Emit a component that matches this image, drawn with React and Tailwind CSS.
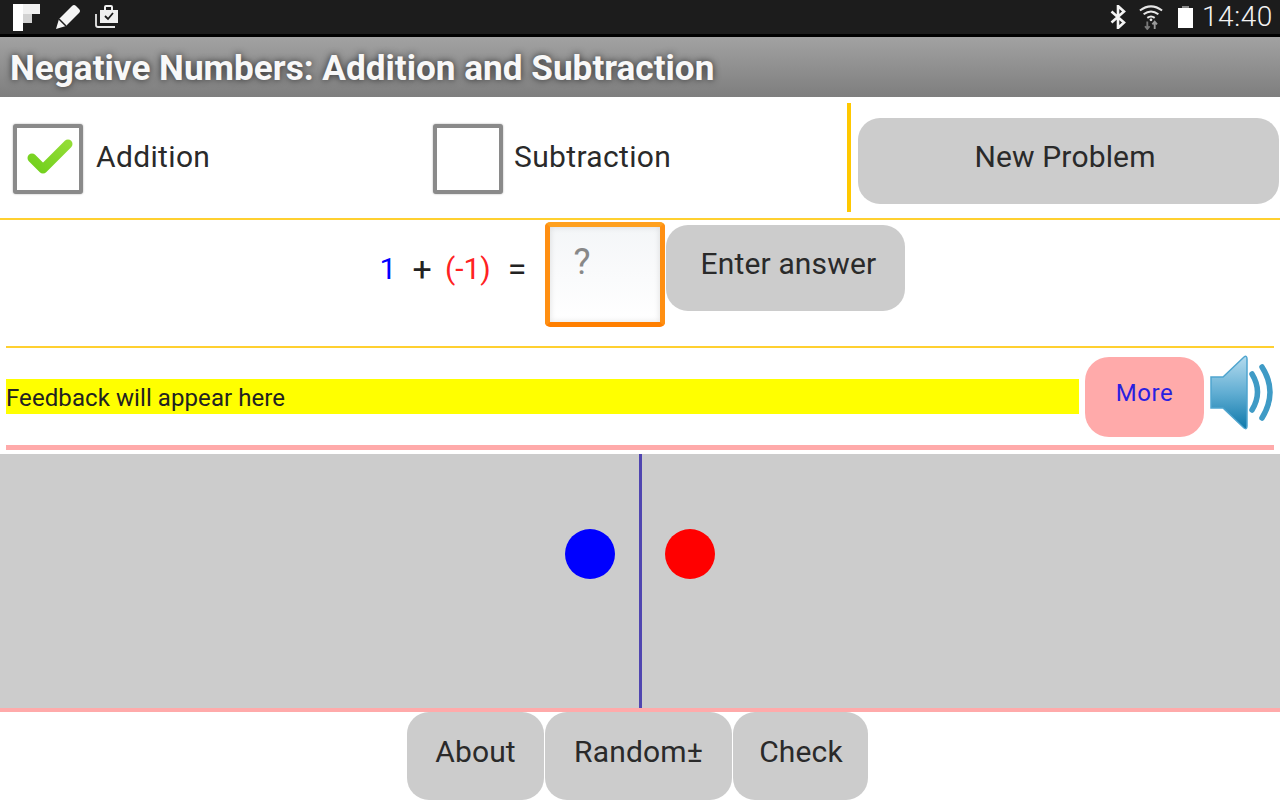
import React from "react";

function Check() {
  return (
    <svg width="50" height="44" viewBox="0 0 50 44" className="absolute left-[7px] top-[6px]">
      <defs>
        <linearGradient id="chk" x1="0" y1="1" x2="1" y2="0">
          <stop offset="0" stopColor="#72d01c" />
          <stop offset="1" stopColor="#92dc36" />
        </linearGradient>
      </defs>
      <path d="M8 24 L19 35 L44 10" fill="none" stroke="url(#chk)" strokeWidth="9" strokeLinecap="round" strokeLinejoin="round" />
    </svg>
  );
}

function CheckItem({ checked, label, className }) {
  return (
    <div className={"flex items-center " + className}>
      <div className="relative mt-[2px] w-[70px] h-[70px] shrink-0 border-[4px] border-[#8a8a8a] rounded-[3px] bg-white shadow-[0_0_2px_rgba(0,0,0,0.35)]">
        {checked && <Check />}
      </div>
      <span className="mb-[2px] text-[30px] leading-none tracking-[0.35px] text-[#2a2a2a]">{label}</span>
    </div>
  );
}

function GrayButton({ children, className }) {
  return (
    <div className={"flex justify-center bg-[#cccccc] text-[#2a2a2a] text-[30px] tracking-[0.15px] leading-none rounded-[22px] " + className}>
      {children}
    </div>
  );
}

function Speaker() {
  return (
    <svg width="64" height="76" viewBox="0 0 64 76" className="shrink-0">
      <defs>
        <linearGradient id="spk" x1="0" y1="0" x2="0" y2="1">
          <stop offset="0" stopColor="#b4dbee" />
          <stop offset="0.5" stopColor="#62aed3" />
          <stop offset="1" stopColor="#0f79ab" />
        </linearGradient>
      </defs>
      <path d="M1 22 H13 L34 2 Q37 0 37 4 V71 Q37 75 34 73 L13 53 H1 Z" fill="url(#spk)" stroke="#4fa5cf" strokeWidth="1.5" />
      <path d="M42 19 Q53 37 42 55" fill="none" stroke="#3f9bc6" strokeWidth="5.5" strokeLinecap="round" />
      <path d="M52 12 Q68 37 52 63" fill="none" stroke="#3f9bc6" strokeWidth="5.5" strokeLinecap="round" />
    </svg>
  );
}

function StatusBar() {
  return (
    <div className="h-[34px] bg-[#1c1c1c] flex items-center shrink-0">
      <svg width="27" height="27" viewBox="0 0 27 27" className="ml-[13px]">
        <rect x="0" y="0" width="10" height="27" fill="#ffffff" />
        <rect x="10" y="0" width="17" height="10" fill="#f0f0f0" />
        <rect x="10" y="10" width="9" height="9" fill="#d2d2d2" />
      </svg>
      <svg width="26" height="26" viewBox="0 0 26 26" className="ml-[15px]">
        <path d="M1 25 L4 15 L17 2 Q19 0 21 2 L24 5 Q26 7 24 9 L11 22 Z" fill="#f4f4f4" />
        <path d="M4 15 L11 22" stroke="#1c1c1c" strokeWidth="1.5" />
      </svg>
      <svg width="24" height="24" viewBox="0 0 24 24" className="ml-[14px]">
        <path d="M1 9 V20 Q1 22 3 22 H20" fill="none" stroke="#e8e8e8" strokeWidth="1.8" />
        <path d="M5 5 H9 V2 Q9 0 11 0 H16 Q18 0 18 2 V5 H23 V18 H5 Z" fill="#f0f0f0" />
        <rect x="11" y="2" width="5" height="3" fill="#1c1c1c" />
        <path d="M10 11 L13 14 L18 8" fill="none" stroke="#1c1c1c" strokeWidth="1.8" />
      </svg>
      <div className="ml-auto flex items-center">
        <svg width="16" height="24" viewBox="0 0 16 24">
          <path d="M1.5 6.5 L14 17.5 L8 23 V1 L14 6.5 L1.5 17.5" fill="none" stroke="#f4f4f4" strokeWidth="2.6" />
        </svg>
        <svg width="24" height="26" viewBox="0 0 26 26" className="ml-[13px]">
          <path d="M1 6 Q13 -3 25 6" fill="none" stroke="#e6e6e6" strokeWidth="2.2" />
          <path d="M5 10 Q13 4 21 10" fill="none" stroke="#e6e6e6" strokeWidth="2.2" />
          <path d="M9 14 Q13 11 17 14" fill="none" stroke="#e6e6e6" strokeWidth="2.2" />
          <circle cx="13" cy="16" r="1.5" fill="#e6e6e6" />
          <path d="M9 18 V26 M6.5 21 L9 18 L11.5 21" fill="none" stroke="#7a7a7a" strokeWidth="2" transform="rotate(180 9 22)" />
          <path d="M17 18 V26 M14.5 21 L17 18 L19.5 21" fill="none" stroke="#9a9a9a" strokeWidth="2" />
        </svg>
        <svg width="15" height="22" viewBox="0 0 15 22" className="ml-[15px]">
          <rect x="4" y="0" width="7" height="3" fill="#8a8a8a" />
          <rect x="0" y="2" width="15" height="20" fill="#ffffff" />
        </svg>
        <span className="ml-[9px] mr-[7px] text-[28px] leading-none tracking-[0.6px] text-[#f2f2f2] font-light">14:40</span>
      </div>
    </div>
  );
}

export default function App() {
  return (
    <div className="w-[1280px] h-[800px] overflow-hidden flex flex-col bg-white font-['Roboto',sans-serif]">
      <StatusBar />
      <div className="h-[3px] bg-black shrink-0" />
      <div className="h-[60px] shrink-0 flex items-center pl-[10px] pt-[3px] bg-gradient-to-b from-[#a2a2a2] to-[#7e7e7e]">
        <span className="text-[35.15px] leading-none font-bold text-[#f8f8f8] [text-shadow:0_0_7px_rgba(0,0,0,0.7)]">
          Negative Numbers: Addition and Subtraction
        </span>
      </div>

      <div className="h-[121px] shrink-0 flex items-center">
        <CheckItem checked label="Addition" className="ml-[13px] w-[420px] gap-[13px]" />
        <CheckItem label="Subtraction" className="w-[414px] gap-[11px]" />
        <div className="w-[4px] h-[109px] bg-[#ffc800]" />
        <GrayButton className="ml-[7px] w-[421px] h-[86px] mt-[7px] items-center pb-[8px] pr-[7px]">New Problem</GrayButton>
      </div>
      <div className="h-[2px] bg-[#ffd030] shrink-0" />

      <div className="h-[126px] shrink-0 flex items-start justify-center pl-[5px] pt-[2px]">
        <div className="flex items-center h-[94px] text-[30px] leading-none text-[#222]">
          <span className="text-[#0000ff] w-[14px]">1</span>
          <span className="ml-[19px] text-[34px]">+</span>
          <span className="ml-[13px] text-[#ff2222]">(-1)</span>
          <span className="ml-[17px] text-[34px]">=</span>
        </div>
        <div className="ml-[19px] w-[120px] h-[105px] rounded-[5px] border-[5px] border-[#ff8f12] border-t-[#ffa01e] border-b-[#ff7f00] bg-gradient-to-b from-[#f4f6f8] to-white text-[36px] leading-none text-[#888] pl-[23px] pt-[17px] shadow-[inset_0_0_6px_rgba(0,0,0,0.12)]">
          ?
        </div>
        <GrayButton className="ml-[1px] mt-[3px] w-[239px] h-[86px] items-center pb-[8px] pl-[5px]">Enter answer</GrayButton>
      </div>
      <div className="h-[2px] mx-[6px] bg-[#ffd030] shrink-0" />

      <div className="h-[97px] shrink-0 flex items-center pl-[6px]">
        <div className="w-[1073px] h-[35px] bg-[#ffff00] flex items-center text-[24px] leading-none tracking-[0.08px] text-[#222] pt-[2px]">
          Feedback will appear here
        </div>
        <div className="ml-[6px] w-[119px] h-[80px] mt-[1px] rounded-[24px] bg-[#ffaaaa] text-[#2a1fe0] text-[24px] tracking-[0.6px] leading-none flex justify-center items-center pb-[8px]">
          More
        </div>
        <div className="ml-[6px] mt-[-8px]"><Speaker /></div>
      </div>
      <div className="h-[5px] mx-[6px] bg-[#ffaaaa] shrink-0" />
      <div className="h-[4px] shrink-0" />

      <div className="h-[254px] shrink-0 bg-[#cccccc] flex justify-center items-start">
        <div className="mt-[75px] w-[50px] h-[50px] rounded-full bg-[#0000ff]" />
        <div className="w-[3px] self-stretch ml-[24px] mr-[23px] bg-[#4f45b0]" />
        <div className="mt-[75px] w-[50px] h-[50px] rounded-full bg-[#ff0000]" />
      </div>
      <div className="h-[4px] bg-[#ffaaaa] shrink-0" />

      <div className="h-[88px] shrink-0 flex justify-center pr-[5px]">
        <GrayButton className="w-[137px] h-[88px] items-center pb-[8px]">About</GrayButton>
        <GrayButton className="ml-[1px] w-[187px] h-[88px] items-center pb-[8px] tracking-[0.5px]">Random±</GrayButton>
        <GrayButton className="ml-[1px] w-[135px] h-[88px] items-center pb-[8px] pl-[1px]">Check</GrayButton>
      </div>
    </div>
  );
}
